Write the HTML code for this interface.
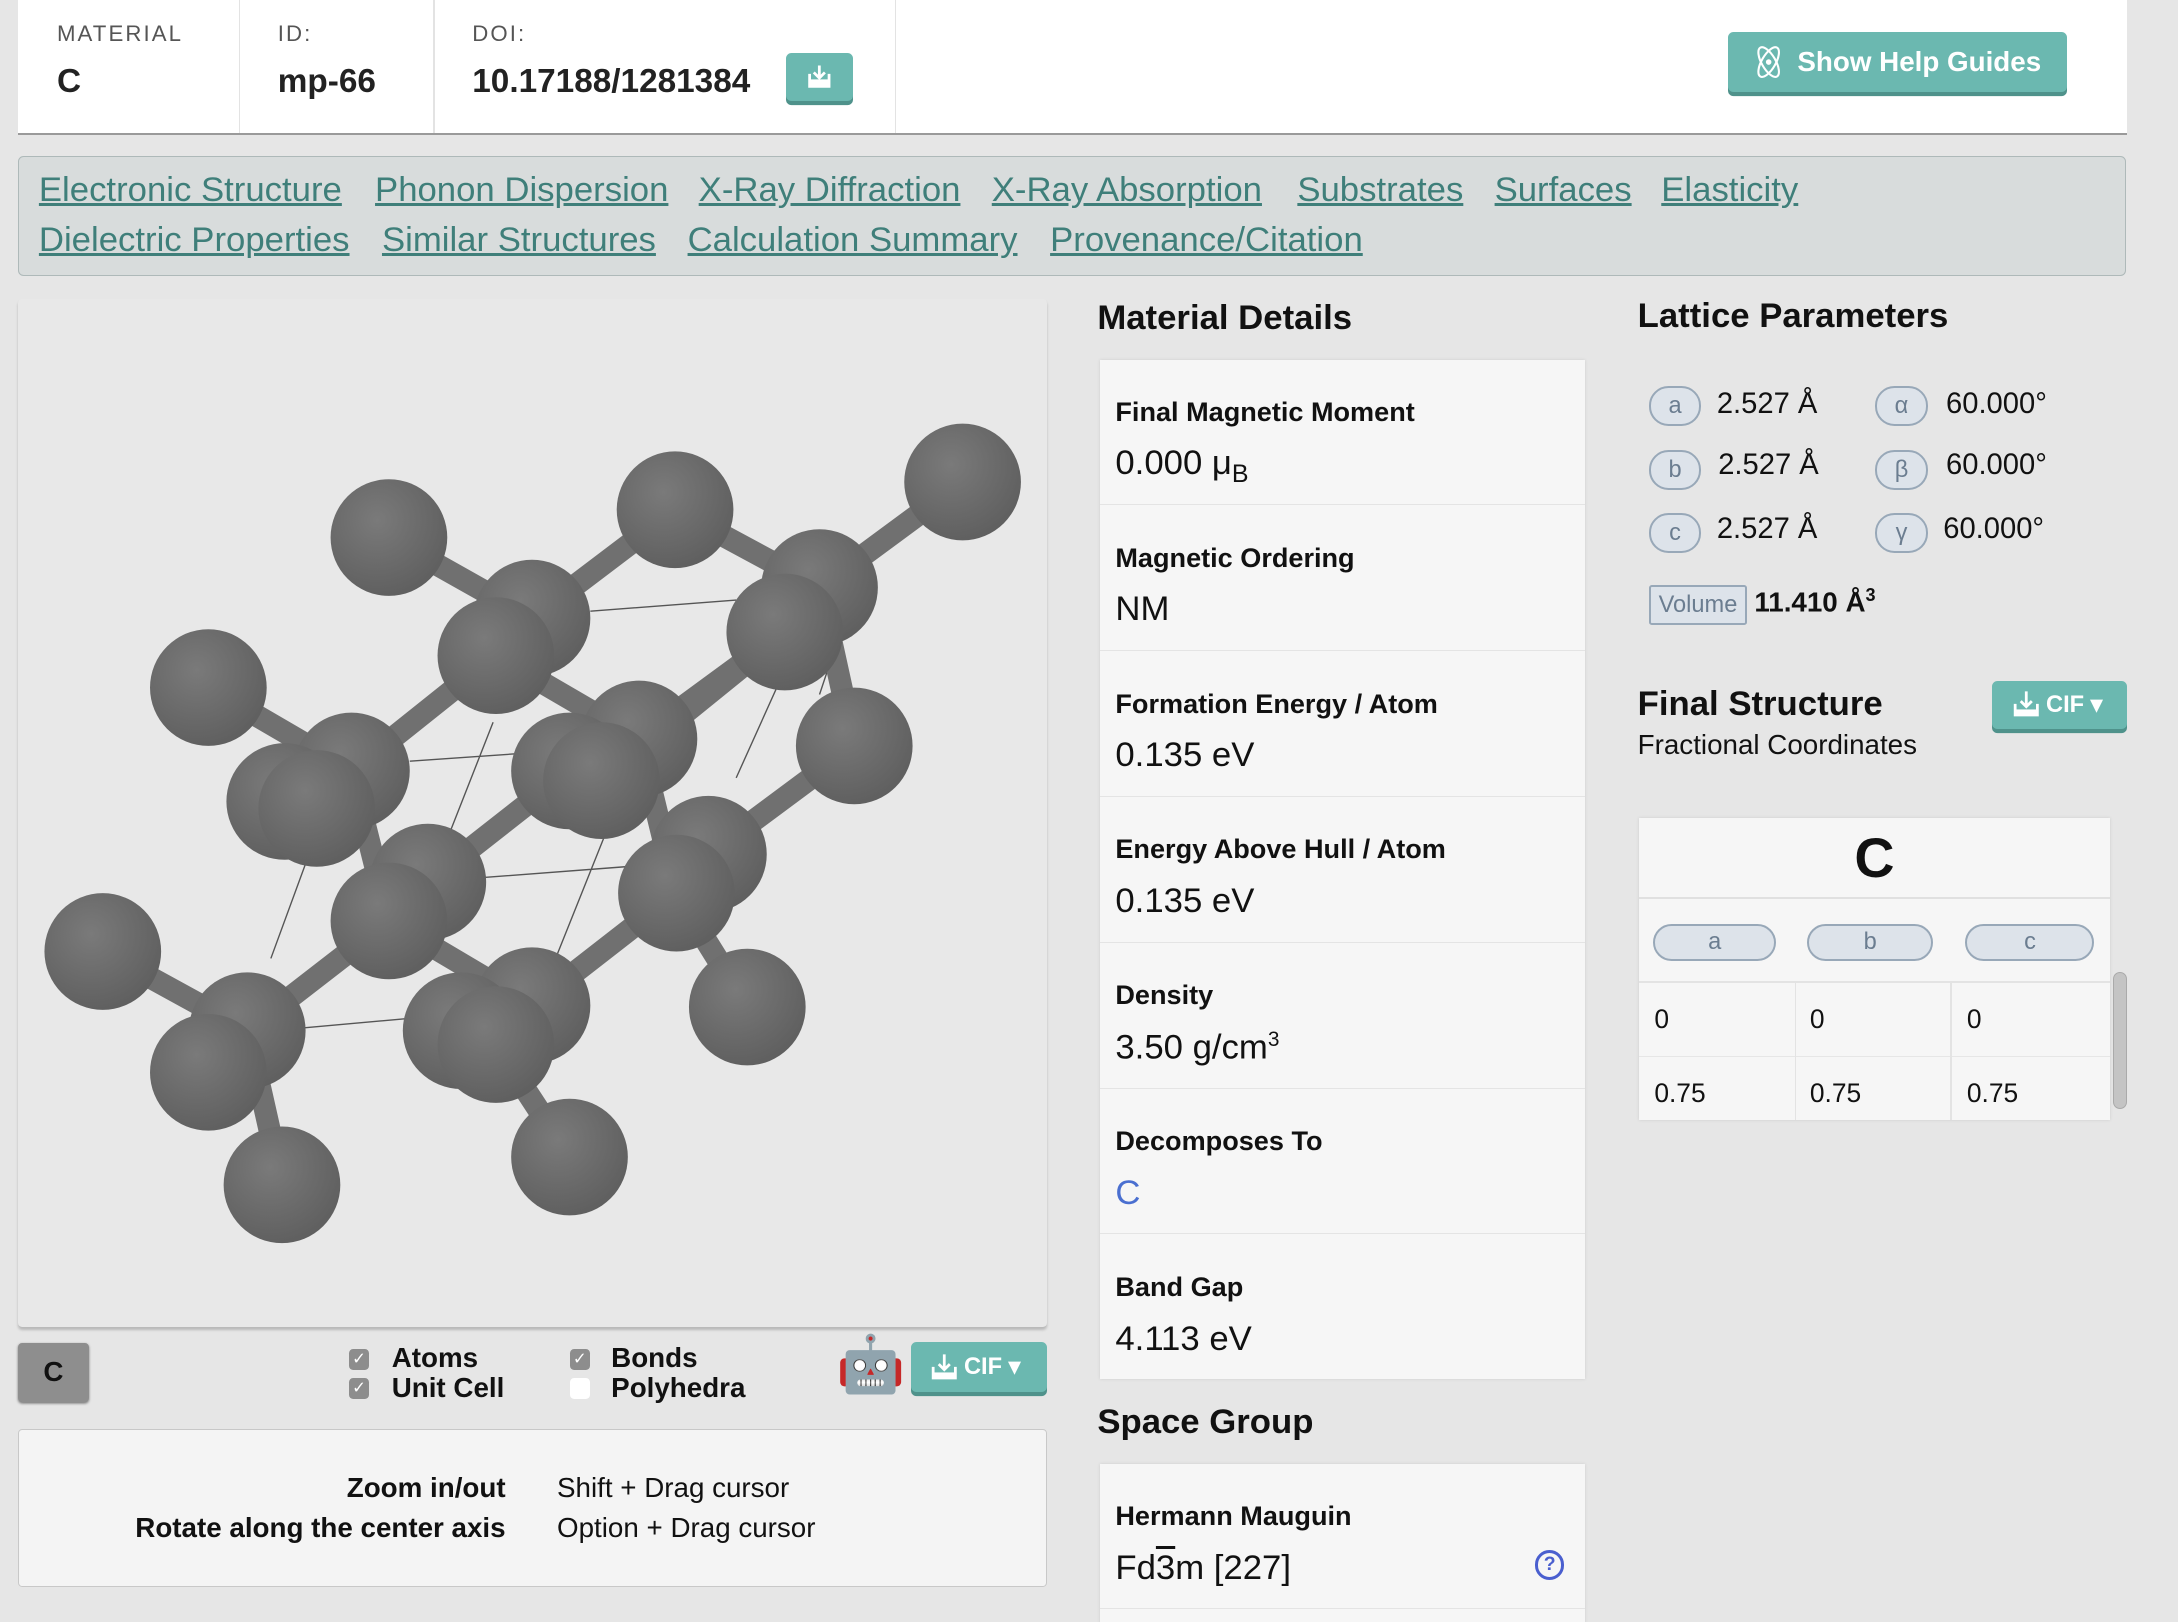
<!DOCTYPE html>
<html><head><meta charset="utf-8"><style>
html,body{margin:0;padding:0;background:#e6e6e6;overflow:hidden}
#w{position:relative;width:1568px;height:1168px;zoom:1.38903;font-family:"Liberation Sans",Arial,sans-serif;color:#111;background:#e6e6e6;overflow:hidden}
.a{position:absolute}
.lbl{font-size:16px;letter-spacing:1.5px;color:#555;top:15px}
.val{font-size:24px;font-weight:bold;top:45px;color:#222}
.vd{position:absolute;top:0;width:1px;height:96px;background:#e3e3e3}
.btn{position:absolute;background:#6bb8b0;border-radius:4px;box-shadow:0 3px 0 #4f928b;color:#fff;font-weight:bold}
.lk{color:#3f7f7a;text-decoration:underline;font-size:25px;position:absolute}
h2{position:absolute;margin:0;font-size:25px;font-weight:bold}
.card{position:absolute;background:#f6f6f6;box-shadow:0 0 2px #ccc}
.row{position:absolute;left:0;right:0;height:104px;border-bottom:1px solid #e4e4e4}
.row b{position:absolute;left:11px;top:26px;font-size:19.5px}
.row span{position:absolute;left:11px;top:61px;font-size:25px}
.pill{position:absolute;border:1.5px solid #98a8b8;background:#dde3ea;border-radius:14px;color:#6b7d90;font-size:17px;text-align:center;height:26px;line-height:26px}
.lv{position:absolute;font-size:21px}
.cb{position:absolute;width:15px;height:15px;border-radius:3px;background:#8d8d8d;color:#fff;font-size:12px;line-height:15px;text-align:center}
.ct{position:absolute;font-size:20px;font-weight:bold}
</style></head><body><div id="w">
<div class="a" style="left:13px;top:0;width:1518px;height:96px;background:#fff;border-bottom:2px solid #9a9a9a"></div>
<div class="vd" style="left:172px"></div><div class="vd" style="left:312px"></div><div class="vd" style="left:644px"></div>
<div class="a lbl" style="left:41px">MATERIAL</div><div class="a val" style="left:41px">C</div>
<div class="a lbl" style="left:200px">ID:</div><div class="a val" style="left:200px">mp-66</div>
<div class="a lbl" style="left:340px">DOI:</div><div class="a val" style="left:340px">10.17188/1281384</div>
<div class="btn" style="left:566px;top:38px;width:48px;height:35px"><svg width="48" height="35" viewBox="0 0 48 35"><path d="M17 15v9h14v-9M24 9v9M20 14l4 4 4-4" stroke="#fff" stroke-width="2" fill="none"/><rect x="17" y="19" width="14" height="5" fill="#fff"/></svg></div>
<div class="btn" style="left:1244px;top:23px;width:244px;height:43px;font-size:20px;line-height:43px"><svg class="a" style="left:17px;top:9px" width="24" height="26" viewBox="0 0 24 26"><g stroke="#fff" stroke-width="1.5" fill="none"><ellipse cx="12" cy="13" rx="5" ry="12" transform="rotate(-30 12 13)"/><ellipse cx="12" cy="13" rx="5" ry="12" transform="rotate(30 12 13)"/></g><circle cx="12" cy="13" r="2" fill="#fff"/></svg><span style="position:absolute;left:50px">Show Help Guides</span></div>
<div class="a" style="left:13px;top:112px;width:1516px;height:85px;background:#d8dcdc;border:1px solid #aeb9b9;border-radius:4px"></div>
<a class="lk" style="left:28px;top:123px">Electronic Structure</a>
<a class="lk" style="left:270px;top:123px">Phonon Dispersion</a>
<a class="lk" style="left:503px;top:123px">X-Ray Diffraction</a>
<a class="lk" style="left:714px;top:123px">X-Ray Absorption</a>
<a class="lk" style="left:934px;top:123px">Substrates</a>
<a class="lk" style="left:1076px;top:123px">Surfaces</a>
<a class="lk" style="left:1196px;top:123px">Elasticity</a>
<a class="lk" style="left:28px;top:159px">Dielectric Properties</a>
<a class="lk" style="left:275px;top:159px">Similar Structures</a>
<a class="lk" style="left:495px;top:159px">Calculation Summary</a>
<a class="lk" style="left:756px;top:159px">Provenance/Citation</a>
<div class="a" style="left:13px;top:215px;width:741px;height:740px;background:#e8e8e8;box-shadow:0 2px 2px #b9b9b9;border-radius:3px"></div>
<svg class="a" style="left:0;top:0" width="760" height="960" viewBox="0 0 760 960">
<defs><radialGradient id="g" cx="0.4" cy="0.35" r="0.7"><stop offset="0" stop-color="#7a7a7a"/><stop offset="1" stop-color="#5e5e5e"/></radialGradient></defs>
<g stroke="#555" stroke-width="1" fill="none">
<path d="M425 440L530 432M295 548L410 540M345 632L450 624M218 740L330 730M195 690L250 540M355 520L300 660M400 690L440 590M530 560L575 460M590 500L610 440"/>
</g>
<g stroke="#707070" stroke-width="16" stroke-linecap="round">
<path d="M693 347L590 423M486 367L590 423M280 387L383 445M383 445L486 367M590 423L615 537M565 455L460 532M150 495L253 555M357 472L460 532M357 472L253 555M433 562L565 455M253 555L280 663M308 635L410 555M510 615L615 537M460 532L487 643M74 685L178 742M178 742L280 663M280 663L383 724M178 742L203 853M383 724L487 643M487 643L538 725M357 752L410 833"/>
</g>
<g fill="url(#g)">
<circle cx="693" cy="347" r="42"/><circle cx="486" cy="367" r="42"/><circle cx="280" cy="387" r="42"/><circle cx="590" cy="423" r="42"/><circle cx="383" cy="445" r="42"/><circle cx="565" cy="455" r="42"/><circle cx="357" cy="472" r="42"/><circle cx="150" cy="495" r="42"/><circle cx="615" cy="537" r="42"/><circle cx="460" cy="532" r="42"/><circle cx="410" cy="555" r="42"/><circle cx="433" cy="562" r="42"/><circle cx="253" cy="555" r="42"/><circle cx="205" cy="577" r="42"/><circle cx="228" cy="582" r="42"/><circle cx="510" cy="615" r="42"/><circle cx="308" cy="635" r="42"/><circle cx="487" cy="643" r="42"/><circle cx="280" cy="663" r="42"/><circle cx="74" cy="685" r="42"/><circle cx="538" cy="725" r="42"/><circle cx="383" cy="724" r="42"/><circle cx="332" cy="742" r="42"/><circle cx="357" cy="752" r="42"/><circle cx="178" cy="742" r="42"/><circle cx="150" cy="772" r="42"/><circle cx="410" cy="833" r="42"/><circle cx="203" cy="853" r="42"/>
</g></svg>
<div class="a" style="left:13px;top:967px;width:51px;height:42px;background:#8e8e8e;border-radius:3px;box-shadow:0 1px 2px #777;font-weight:bold;font-size:20px;text-align:center;line-height:42px">C</div>
<div class="cb" style="left:251px;top:971px">✓</div><div class="ct" style="left:282px;top:966px">Atoms</div>
<div class="cb" style="left:251px;top:992px">✓</div><div class="ct" style="left:282px;top:988px">Unit Cell</div>
<div class="cb" style="left:410px;top:971px">✓</div><div class="ct" style="left:440px;top:966px">Bonds</div>
<div class="cb" style="left:410px;top:992px;background:#fff"></div><div class="ct" style="left:440px;top:988px">Polyhedra</div>
<div class="a" style="left:602px;top:958px;font-size:40px;line-height:48px;font-family:'Noto Color Emoji',sans-serif">🤖</div>
<div class="btn" style="left:656px;top:966px;width:98px;height:36px;font-size:17px;line-height:36px"><svg class="a" style="left:13px;top:8px" width="22" height="20" viewBox="0 0 22 20"><path d="M3 10v8h16v-8M11 1v11M7 8l4 4 4-4" stroke="#fff" stroke-width="2" fill="none"/><rect x="3" y="14" width="16" height="4" fill="#fff"/></svg><span class="a" style="left:38px">CIF ▾</span></div>
<div class="a" style="left:13px;top:1029px;width:739px;height:112px;background:#f4f4f4;border:1px solid #c8c8c8;border-radius:3px"></div>
<div class="a" style="right:1204px;top:1057px;font-size:20px;font-weight:bold;text-align:right;line-height:29px">Zoom in/out<br>Rotate along the center axis</div>
<div class="a" style="left:401px;top:1057px;font-size:20px;line-height:29px">Shift + Drag cursor<br>Option + Drag cursor</div>
<h2 style="left:790px;top:215px">Material Details</h2>
<div class="card" style="left:792px;top:259px;width:349px;height:734px">
<div class="row" style="top:0"><b>Final Magnetic Moment</b><span>0.000 μ<sub style="font-size:18px">B</sub></span></div>
<div class="row" style="top:105px"><b>Magnetic Ordering</b><span>NM</span></div>
<div class="row" style="top:210px"><b>Formation Energy / Atom</b><span>0.135 eV</span></div>
<div class="row" style="top:315px"><b>Energy Above Hull / Atom</b><span>0.135 eV</span></div>
<div class="row" style="top:420px"><b>Density</b><span>3.50 g/cm<sup style="font-size:15px">3</sup></span></div>
<div class="row" style="top:525px"><b>Decomposes To</b><span style="color:#4a6fd0">C</span></div>
<div class="row" style="top:630px;border:none"><b>Band Gap</b><span>4.113 eV</span></div>
</div>
<h2 style="left:790px;top:1010px">Space Group</h2>
<div class="card" style="left:792px;top:1054px;width:349px;height:120px">
<div class="row" style="top:0"><b>Hermann Mauguin</b><span>Fd<span style="position:static;text-decoration:overline">3</span>m [227]</span></div>
<div class="a" style="left:313px;top:62px;width:17px;height:17px;border:2.5px solid #4a5fcf;border-radius:50%;color:#4a5fcf;font-size:14px;font-weight:bold;text-align:center;line-height:17px">?</div>
</div>
<h2 style="left:1179px;top:214px">Lattice Parameters</h2>
<div class="pill" style="left:1187px;top:278px;width:35px">a</div><div class="lv" style="left:1236px;top:279px">2.527 Å</div>
<div class="pill" style="left:1350px;top:278px;width:35px">α</div><div class="lv" style="left:1401px;top:279px">60.000°</div>
<div class="pill" style="left:1187px;top:324px;width:35px">b</div><div class="lv" style="left:1237px;top:323px">2.527 Å</div>
<div class="pill" style="left:1350px;top:324px;width:35px">β</div><div class="lv" style="left:1401px;top:323px">60.000°</div>
<div class="pill" style="left:1187px;top:369px;width:35px">c</div><div class="lv" style="left:1236px;top:369px">2.527 Å</div>
<div class="pill" style="left:1350px;top:369px;width:35px">γ</div><div class="lv" style="left:1399px;top:369px">60.000°</div>
<div class="pill" style="left:1187px;top:421px;width:68px;border-radius:2px">Volume</div>
<div class="lv" style="left:1263px;top:421px;font-weight:bold;font-size:20px">11.410 Å<sup style="font-size:13px">3</sup></div>
<h2 style="left:1179px;top:493px">Final Structure</h2>
<div class="a" style="left:1179px;top:525px;font-size:20px">Fractional Coordinates</div>
<div class="btn" style="left:1434px;top:490px;width:97px;height:35px;font-size:17px;line-height:35px"><svg class="a" style="left:14px;top:7px" width="22" height="20" viewBox="0 0 22 20"><path d="M3 10v8h16v-8M11 1v11M7 8l4 4 4-4" stroke="#fff" stroke-width="2" fill="none"/><rect x="3" y="14" width="16" height="4" fill="#fff"/></svg><span class="a" style="left:39px">CIF ▾</span></div>
<div class="card" style="left:1180px;top:589px;width:339px;height:217px">
<div class="a" style="left:0;right:0;top:6px;text-align:center;font-size:40px;font-weight:bold">C</div>
<div class="a" style="left:0;right:0;top:57px;height:1px;background:#e0e0e0"></div>
<div class="pill" style="left:10px;top:76px;width:86px;height:24px;line-height:24px">a</div>
<div class="pill" style="left:121px;top:76px;width:88px;height:24px;line-height:24px">b</div>
<div class="pill" style="left:235px;top:76px;width:90px;height:24px;line-height:24px">c</div>
<div class="a" style="left:0;right:0;top:117px;height:2px;background:#e3e3e3"></div>
<div class="a" style="left:0;right:0;top:171px;height:1px;background:#e6e6e6"></div>
<div class="a" style="left:112px;top:118px;width:1px;height:99px;background:#e3e3e3"></div>
<div class="a" style="left:224px;top:118px;width:1px;height:99px;background:#e3e3e3"></div>
<div class="lv" style="left:11px;top:134px;font-size:19px">0</div><div class="lv" style="left:123px;top:134px;font-size:19px">0</div><div class="lv" style="left:236px;top:134px;font-size:19px">0</div>
<div class="lv" style="left:11px;top:187px;font-size:19px">0.75</div><div class="lv" style="left:123px;top:187px;font-size:19px">0.75</div><div class="lv" style="left:236px;top:187px;font-size:19px">0.75</div>
</div>
<div class="a" style="left:1521px;top:700px;width:9px;height:97px;background:#c4c4c4;border-radius:5px;border:1px solid #aaa"></div>
</div></body></html>
